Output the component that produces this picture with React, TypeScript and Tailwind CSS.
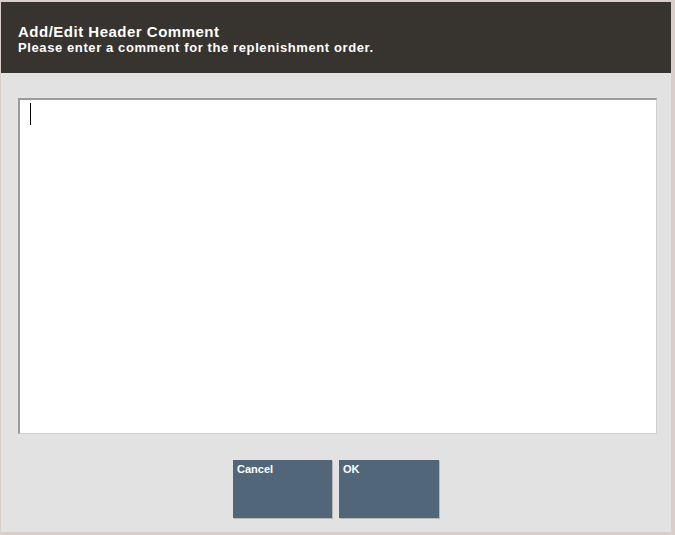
import React from "react";

export default function App() {
  return (
    <div
      className="w-[675px] h-[535px] bg-[#d9cfc8] overflow-hidden"
      style={{ fontFamily: '"Liberation Sans", Arial, sans-serif' }}
    >
      <div className="ml-[1px] mt-[2px] w-[670px] h-[530px] bg-[#e2e2e2] flex flex-col">
        <div className="h-[71px] bg-[#37332f] pl-[17px] pt-[21px] text-white font-bold">
          <div className="text-[15px] leading-[17px] tracking-[0.5px]">Add/Edit Header Comment</div>
          <div className="text-[13px] leading-[16px] tracking-[0.6px]">
            Please enter a comment for the replenishment order.
          </div>
        </div>
        <div className="mt-[25px] ml-[17px] w-[639px] h-[336px] bg-white border-t-2 border-l-2 border-t-[#9a9a9a] border-l-[#9a9a9a] border-r border-b border-r-[#d0d0d0] border-b-[#d0d0d0] pl-[10px] pt-[3px]">
          <div className="w-[1px] h-[22px] bg-black" />
        </div>
        <div className="mt-[26px] flex justify-center gap-[7px]">
          <button className="w-[99px] h-[58px] bg-[#52667a] text-white font-bold text-[11px] text-left pl-[4px] pt-[1px] flex items-start shadow-[1px_1px_0_#b8b8b8]">
            Cancel
          </button>
          <button className="w-[100px] h-[58px] bg-[#52667a] text-white font-bold text-[11px] text-left pl-[4px] pt-[1px] flex items-start shadow-[1px_1px_0_#b8b8b8]">
            OK
          </button>
        </div>
      </div>
    </div>
  );
}
